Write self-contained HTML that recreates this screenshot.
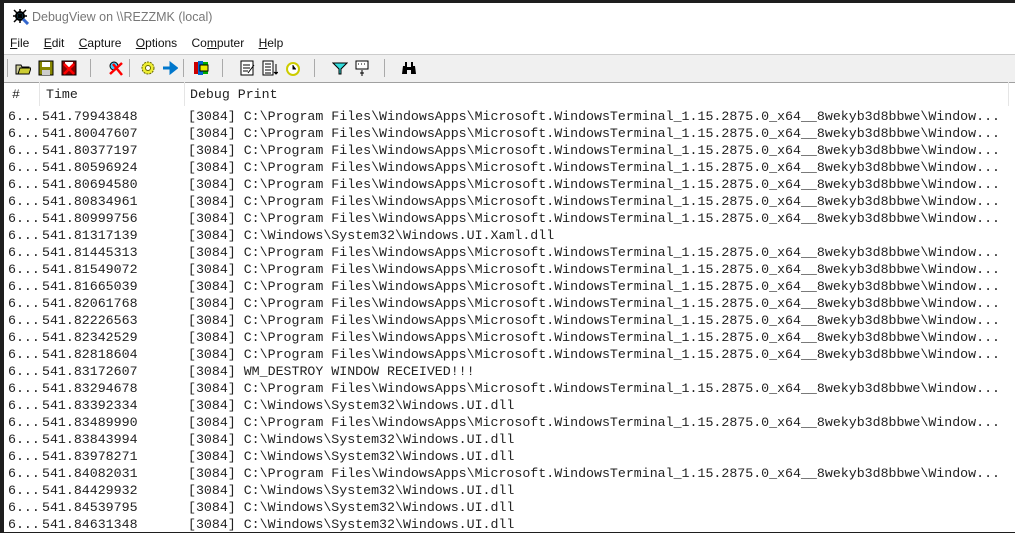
<!DOCTYPE html>
<html><head><style>
body{margin:0;width:1015px;height:532px;overflow:hidden;background:#1e1e1e;position:relative;font-family:"Liberation Sans",sans-serif}
#win{position:absolute;left:4px;top:3px;right:0;bottom:0;background:#fff}
.title{position:absolute;left:28px;top:7px;font-size:12.5px;color:#777}
.menu{position:absolute;top:33px;left:6px;font-size:12px;color:#111}
.menu span{margin-right:11px}
.tb{position:absolute;top:51px;left:0;right:0;height:27px;background:#f0f0f0;border-top:1px solid #ccc;border-bottom:1px solid #a0a0a0}
.ic{position:absolute;top:5px;width:16px;height:16px}
.sep{position:absolute;top:4px;width:1px;height:18px;background:#aaa}
.hdr{position:absolute;top:79px;left:0;right:0;height:24px;font-size:12px}
.hdr span{position:absolute;top:5px;font-family:"Liberation Mono",monospace;font-size:13.28px;color:#222}
.vl{position:absolute;top:0;width:1px;height:24px;background:#e5e5e5}
pre{position:absolute;top:105px;margin:0;font-family:"Liberation Mono",monospace;font-size:13.28px;line-height:17px;color:#222}
</style></head><body><div id="win">
<svg style="position:absolute;left:9px;top:6px" width="16" height="16"><circle cx="7" cy="7" r="4" fill="#4cf" stroke="#000" stroke-width="2"/><path d="M1 1l12 12M13 1L1 13M7 0v14M0 7h14" stroke="#000" stroke-width="1.5"/><path d="M10 10l5 5" stroke="#36c" stroke-width="3"/></svg>
<div class="title">DebugView on \\REZZMK (local)</div>
<div class="menu"><span><u>F</u>ile</span> <span><u>E</u>dit</span> <span><u>C</u>apture</span> <span><u>O</u>ptions</span> <span>Co<u>m</u>puter</span> <span><u>H</u>elp</span></div>
<div class="tb">
<div class="sep" style="left:3px"></div>
<svg class="ic" style="left:11px"><path d="M1 5h5l1 2h7v7H1z" fill="#cc9" stroke="#000"/><path d="M3 14l2-6h11l-2 6z" fill="#cc3" stroke="#000"/></svg>
<svg class="ic" style="left:34px"><rect x="1" y="1" width="14" height="14" fill="#880" stroke="#000"/><rect x="4" y="2" width="8" height="5" fill="#fff"/><rect x="4" y="10" width="8" height="5" fill="#ccc"/></svg>
<svg class="ic" style="left:57px"><rect x="1" y="1" width="14" height="14" fill="#800" stroke="#000"/><rect x="4" y="2" width="8" height="5" fill="#fff"/><path d="M3 4l10 10M13 4L3 14" stroke="#f00" stroke-width="2.5"/></svg>
<div class="sep" style="left:86px"></div>
<svg class="ic" style="left:104px"><circle cx="6" cy="6" r="4" fill="#4cf" stroke="#000"/><path d="M2 14L14 3M5 4l9 11" stroke="#f00" stroke-width="2.5"/></svg>
<div class="sep" style="left:125px"></div>
<svg class="ic" style="left:136px"><circle cx="8" cy="8" r="6" fill="#ee3" stroke="#660" stroke-dasharray="2 1"/><circle cx="8" cy="8" r="2.5" fill="#fff" stroke="#660"/></svg>
<svg class="ic" style="left:158px"><path d="M1 8h10M9 4l5 4-5 4z" stroke="#07c" stroke-width="3" fill="#07c"/></svg>
<div class="sep" style="left:179px"></div>
<svg class="ic" style="left:189px"><rect x="1" y="2" width="4" height="12" fill="#c00"/><rect x="5" y="1" width="5" height="14" fill="#06c"/><rect x="10" y="2" width="5" height="12" fill="#0a0"/><rect x="7" y="5" width="8" height="6" fill="#ee0" stroke="#000"/></svg>
<div class="sep" style="left:218px"></div>
<svg class="ic" style="left:236px"><rect x="1" y="1" width="12" height="14" fill="#fff" stroke="#000"/><path d="M3 5h7M3 8h7M3 11h5M8 13l6-8" stroke="#000"/></svg>
<svg class="ic" style="left:258px"><rect x="1" y="1" width="10" height="14" fill="#fff" stroke="#000"/><path d="M3 4h6M3 7h6M3 10h6M3 13h6M14 4v10M12 12l2 2 2-2" stroke="#000"/></svg>
<svg class="ic" style="left:281px"><circle cx="8" cy="9" r="6" fill="#fff" stroke="#cc0" stroke-width="2"/><path d="M8 5v4h3" stroke="#000"/></svg>
<div class="sep" style="left:310px"></div>
<svg class="ic" style="left:328px"><path d="M1 3h14L9 9v5H7V9z" fill="#3dd" stroke="#000"/></svg>
<svg class="ic" style="left:350px"><rect x="2" y="1" width="12" height="8" fill="#fff" stroke="#000"/><path d="M4 4h1M7 4h1M10 4h1M8 10v6M6 13h4" stroke="#000"/></svg>
<div class="sep" style="left:380px"></div>
<svg class="ic" style="left:397px"><path d="M2 6h4v8H1zM10 6h4l1 8h-5zM4 2h2v4H4zM10 2h2v4h-2zM6 7h4v3H6z" fill="#000"/></svg>
</div>
<div class="hdr"><span style="left:8px">#</span><div class="vl" style="left:35px"></div><span style="left:42px">Time</span><div class="vl" style="left:180px"></div><span style="left:186px">Debug Print</span><div class="vl" style="left:1004px"></div></div>
<pre style="left:4px">6...
6...
6...
6...
6...
6...
6...
6...
6...
6...
6...
6...
6...
6...
6...
6...
6...
6...
6...
6...
6...
6...
6...
6...
6...</pre>
<pre style="left:38px">541.79943848
541.80047607
541.80377197
541.80596924
541.80694580
541.80834961
541.80999756
541.81317139
541.81445313
541.81549072
541.81665039
541.82061768
541.82226563
541.82342529
541.82818604
541.83172607
541.83294678
541.83392334
541.83489990
541.83843994
541.83978271
541.84082031
541.84429932
541.84539795
541.84631348</pre>
<pre style="left:184px">[3084] C:\Program Files\WindowsApps\Microsoft.WindowsTerminal_1.15.2875.0_x64__8wekyb3d8bbwe\Window...
[3084] C:\Program Files\WindowsApps\Microsoft.WindowsTerminal_1.15.2875.0_x64__8wekyb3d8bbwe\Window...
[3084] C:\Program Files\WindowsApps\Microsoft.WindowsTerminal_1.15.2875.0_x64__8wekyb3d8bbwe\Window...
[3084] C:\Program Files\WindowsApps\Microsoft.WindowsTerminal_1.15.2875.0_x64__8wekyb3d8bbwe\Window...
[3084] C:\Program Files\WindowsApps\Microsoft.WindowsTerminal_1.15.2875.0_x64__8wekyb3d8bbwe\Window...
[3084] C:\Program Files\WindowsApps\Microsoft.WindowsTerminal_1.15.2875.0_x64__8wekyb3d8bbwe\Window...
[3084] C:\Program Files\WindowsApps\Microsoft.WindowsTerminal_1.15.2875.0_x64__8wekyb3d8bbwe\Window...
[3084] C:\Windows\System32\Windows.UI.Xaml.dll
[3084] C:\Program Files\WindowsApps\Microsoft.WindowsTerminal_1.15.2875.0_x64__8wekyb3d8bbwe\Window...
[3084] C:\Program Files\WindowsApps\Microsoft.WindowsTerminal_1.15.2875.0_x64__8wekyb3d8bbwe\Window...
[3084] C:\Program Files\WindowsApps\Microsoft.WindowsTerminal_1.15.2875.0_x64__8wekyb3d8bbwe\Window...
[3084] C:\Program Files\WindowsApps\Microsoft.WindowsTerminal_1.15.2875.0_x64__8wekyb3d8bbwe\Window...
[3084] C:\Program Files\WindowsApps\Microsoft.WindowsTerminal_1.15.2875.0_x64__8wekyb3d8bbwe\Window...
[3084] C:\Program Files\WindowsApps\Microsoft.WindowsTerminal_1.15.2875.0_x64__8wekyb3d8bbwe\Window...
[3084] C:\Program Files\WindowsApps\Microsoft.WindowsTerminal_1.15.2875.0_x64__8wekyb3d8bbwe\Window...
[3084] WM_DESTROY WINDOW RECEIVED!!!
[3084] C:\Program Files\WindowsApps\Microsoft.WindowsTerminal_1.15.2875.0_x64__8wekyb3d8bbwe\Window...
[3084] C:\Windows\System32\Windows.UI.dll
[3084] C:\Program Files\WindowsApps\Microsoft.WindowsTerminal_1.15.2875.0_x64__8wekyb3d8bbwe\Window...
[3084] C:\Windows\System32\Windows.UI.dll
[3084] C:\Windows\System32\Windows.UI.dll
[3084] C:\Program Files\WindowsApps\Microsoft.WindowsTerminal_1.15.2875.0_x64__8wekyb3d8bbwe\Window...
[3084] C:\Windows\System32\Windows.UI.dll
[3084] C:\Windows\System32\Windows.UI.dll
[3084] C:\Windows\System32\Windows.UI.dll</pre>
</div></body></html>
